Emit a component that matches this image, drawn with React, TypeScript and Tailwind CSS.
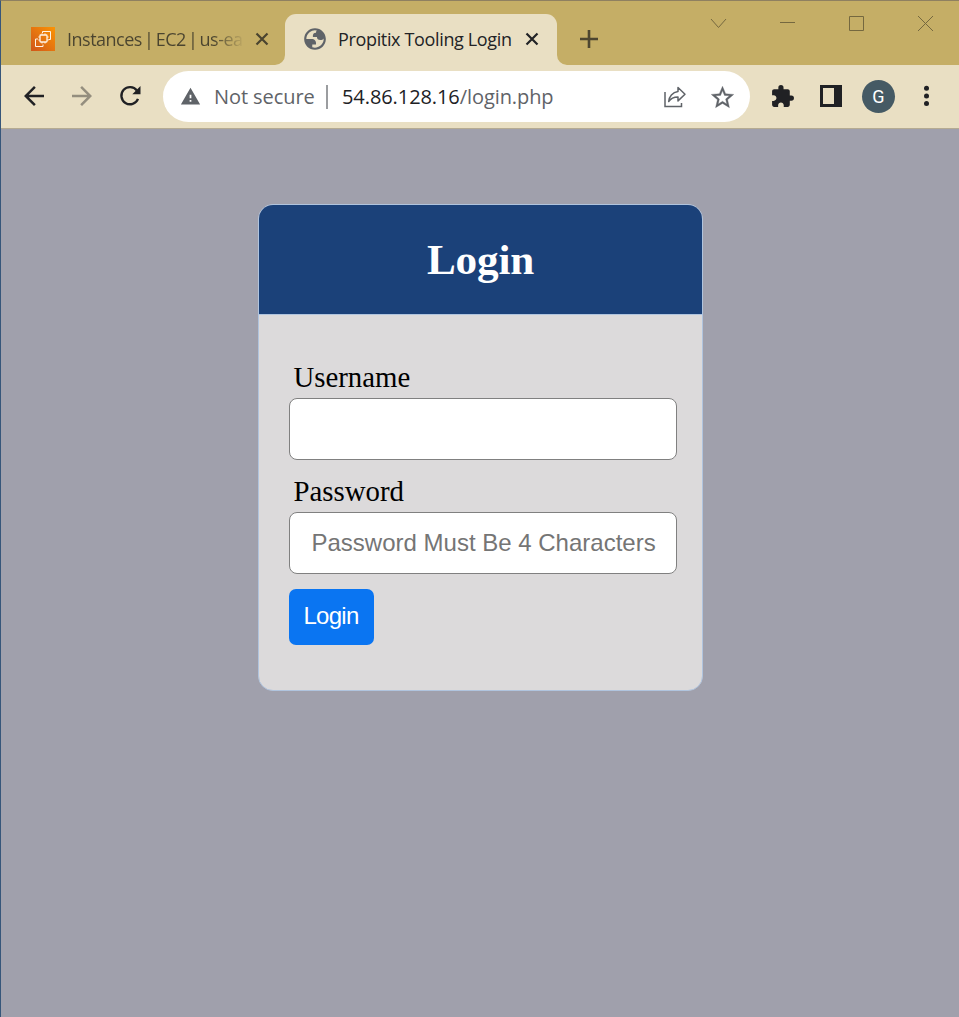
import type { ReactNode } from "react";

function Icon({ size, box = "0 0 24 24", className = "", children }: { size: number; box?: string; className?: string; children: ReactNode }) {
  return (
    <svg width={size} height={size} viewBox={box} fill="currentColor" className={`block shrink-0 ${className}`} aria-hidden="true">
      {children}
    </svg>
  );
}

function Ec2Icon() {
  return (
    <svg width="24" height="24" viewBox="0 0 24 24" className="block shrink-0" aria-hidden="true">
      <defs>
        <linearGradient id="ec2" x1="0" y1="1" x2="1" y2="0">
          <stop offset="0" stopColor="#d05619" />
          <stop offset="1" stopColor="#fb9405" />
        </linearGradient>
      </defs>
      <rect width="24" height="24" fill="url(#ec2)" />
      <g fill="none" stroke="#fff4e6">
        <rect x="9" y="8" width="7" height="7" rx="0.8" strokeWidth="1.300" />
        <path d="M11 6.300v1.500M14 6.300v1.500M11 15v1.600M14 15v1.600M7.300 10h1.500M7.300 13h1.500M16 10h1.700M16 13h1.700" strokeWidth="0.900" />
        <path d="M11.500 6V4.500h8v8h-2M7 12H4.500v7.500h7.500V17.500" strokeWidth="1" />
      </g>
    </svg>
  );
}

function CloseIcon() {
  return (
    <svg width="14" height="14" viewBox="0 0 14 14" className="block shrink-0" aria-hidden="true">
      <path d="M1.500 1.500l11 11M12.500 1.500l-11 11" stroke="currentColor" strokeWidth="2.200" />
    </svg>
  );
}

function WindowControls() {
  return (
    <div className="mt-[14px] ml-auto mr-[25px] flex gap-[52px] text-[#75683f]">
      <svg width="17" height="17" viewBox="0 0 17 17" fill="none" stroke="currentColor"><path d="M1 4l7.500 8.500 7.500-8.500" /></svg>
      <svg width="17" height="17" viewBox="0 0 17 17" fill="none" stroke="currentColor"><path d="M1 7.500h15" /></svg>
      <svg width="17" height="17" viewBox="0 0 17 17" fill="none" stroke="currentColor"><path d="M1.500 1.500h14v14h-14z" /></svg>
      <svg width="17" height="17" viewBox="0 0 17 17" fill="none" stroke="currentColor"><path d="M1 1l15 15M16 1L1 16" /></svg>
    </div>
  );
}

function TabStrip() {
  return (
    <header className="flex h-[64px] bg-[#c5ae66]">
      <div className="mt-[13px] flex h-[50px] w-[274px] items-center pl-[30px] text-[#4a442f]">
        <Ec2Icon />
        <span className="ml-[12px] w-[178px] whitespace-nowrap bg-linear-to-r from-[#4a442f] from-82% to-transparent bg-clip-text font-['Open_Sans','Noto_Sans',sans-serif] text-[18px] tracking-[-0.500px] text-transparent [word-spacing:-2px]">
          Instances | EC2 | us-ea
        </span>
        <span className="ml-[10px]"><CloseIcon /></span>
      </div>
      <svg width="10" height="10" viewBox="0 0 10 10" className="block shrink-0 self-end text-[#e9dfc3]"><path d="M10 0v10H0A10 10 0 0 0 10 0z" fill="currentColor" /></svg>
      <div className="mt-[13px] flex h-[51px] w-[272px] shrink-0 items-center rounded-t-[11px] bg-[#e9dfc3] pb-px pl-[17px] text-[#222326]">
        <Icon size={26} className="text-[#5f6368]">
          <path d="M12 2C6.480 2 2 6.480 2 12s4.480 10 10 10 10-4.480 10-10S17.520 2 12 2zM4 12h4.400c3.407.022 4.922 1.730 4.543 5.127H9.488v2.470a8.004 8.004 0 0 0 10.498-8.083C19.327 12.504 18.332 13 17 13c-2.137 0-3.206-.916-3.206-2.750h-3.748c-.274-2.728.683-4.092 2.870-4.092 0-.975.327-1.597.811-1.970A8.004 8.004 0 0 0 4 12z" fillRule="evenodd" />
        </Icon>
        <span className="ml-[10px] w-[174px] whitespace-nowrap font-['Open_Sans','Noto_Sans',sans-serif] text-[18px] tracking-[-0.350px]">Propitix Tooling Login</span>
        <span className="ml-[13px]"><CloseIcon /></span>
      </div>
      <svg width="10" height="10" viewBox="0 0 10 10" className="block shrink-0 self-end text-[#e9dfc3]"><path d="M0 0v10h10A10 10 0 0 1 0 0z" fill="currentColor" /></svg>
      <svg width="18" height="18" viewBox="0 0 18 18" className="mt-[29px] ml-[13px] block shrink-0"><path d="M9 0v18M0 9h18" stroke="#4d4630" strokeWidth="2.600" /></svg>
      <WindowControls />
    </header>
  );
}

function Toolbar() {
  return (
    <nav className="flex h-[64px] items-center border-b border-[#b5ab92] bg-[#e9dfc3] pb-px text-[#202124]">
      <Icon size={30} className="ml-[18px]"><path d="M20 11H7.830l5.590-5.590L12 4l-8 8 8 8 1.410-1.410L7.830 13H20v-2z" /></Icon>
      <Icon size={30} className="ml-[18px] text-[#948e7e]"><path d="M4 13h12.170l-5.590 5.590L12 20l8-8-8-8-1.410 1.410L16.170 11H4v2z" /></Icon>
      <svg width="24" height="24" viewBox="0 0 24 24" className="ml-[21px] block shrink-0">
        <path d="M18.900 6.500A8.600 8.600 0 1 0 20 14.800" fill="none" stroke="currentColor" strokeWidth="2.300" />
        <path d="M22.500 2v8.200h-8.200z" fill="currentColor" />
      </svg>
      <div className="ml-[21px] flex h-[51px] w-[587px] items-center rounded-full bg-white pl-[17px] font-['Open_Sans','Noto_Sans',sans-serif] text-[20px] text-[#5f6368]">
        <Icon size={21} className="mt-px"><path d="M1 21h22L12 2 1 21zm12-3h-2v-2h2v2zm0-4h-2v-4h2v4z" /></Icon>
        <span className="ml-[13px] w-[112px] whitespace-nowrap pt-[2px] tracking-[-0.080px]">Not secure</span>
        <span className="mt-[2px] h-[24px] w-[2px] shrink-0 bg-[#9b9da0]" />
        <span className="ml-[14px] w-[321px] whitespace-nowrap pt-[2px] tracking-[-0.080px]"><span className="text-[#202124]">54.86.128.16</span>/login.php</span>
        <svg width="24" height="24" viewBox="0 0 24 24" fill="none" stroke="currentColor" strokeWidth="1.500" className="mt-[2px] block shrink-0">
          <path d="M2 7v14.500h16.500V18" />
          <path d="M15 2.500l7 6.700-7 6.700v-4c-4 0-7 1-9.300 4.600C6 11.500 9.500 7.300 15 6.500z" strokeLinejoin="round" />
        </svg>
        <Icon size={27} className="mt-[2px] ml-[22px]"><path stroke="currentColor" strokeWidth="0.300" d="M22 9.240l-7.190-.62L12 2 9.190 8.630 2 9.240l5.460 4.730L5.820 21 12 17.270 18.180 21l-1.630-7.030L22 9.240zM12 15.400l-3.760 2.270 1-4.280-3.320-2.880 4.380-.38L12 6.100l1.710 4.040 4.380.38-3.320 2.880 1 4.280L12 15.400z" /></Icon>
      </div>
      <Icon size={25} className="ml-[20px]"><path d="M20.500 11H19V7c0-1.100-.9-2-2-2h-4V3.500a2.500 2.500 0 0 0-5 0V5H4c-1.100 0-1.990.9-1.990 2v3.800H3.500c1.490 0 2.700 1.210 2.700 2.700s-1.210 2.700-2.700 2.700H2V20c0 1.100.9 2 2 2h3.800v-1.500c0-1.490 1.210-2.700 2.700-2.700s2.700 1.210 2.700 2.700V22H17c1.100 0 2-.9 2-2v-4h1.500a2.500 2.500 0 0 0 0-5z" /></Icon>
      <svg width="22" height="22" viewBox="0 0 22 22" className="ml-[25px] block shrink-0"><path d="M0 0h22v22H0zM3 3v16h11V3z" fill="currentColor" fillRule="evenodd" /></svg>
      <span className="ml-[20px] flex size-[33px] shrink-0 items-center justify-center rounded-full bg-[#455a64] font-['Roboto',sans-serif] text-[18px] text-white">G</span>
      <svg width="6" height="22" viewBox="0 0 6 22" fill="currentColor" className="ml-[28px] block shrink-0"><circle cx="3.500" cy="3.200" r="2.500" /><circle cx="3.500" cy="11" r="2.500" /><circle cx="3.500" cy="18.600" r="2.500" /></svg>
    </nav>
  );
}

function LoginCard() {
  return (
    <main className="mx-auto mt-[75px] h-[487px] w-[445px] overflow-hidden rounded-[15px] border border-[#b0c4de] bg-[#dcdadb]">
      <h1 className="flex h-[110px] items-center justify-center border-b border-[#b0c4de] bg-[#1b4179] pt-[2px] pl-px font-['Liberation_Serif',serif] text-[43.200px] font-bold tracking-[-0.200px] text-white">Login</h1>
      <form className="flex flex-col items-start pt-[45px] pl-[30px]" onSubmit={(e) => e.preventDefault()}>
        <label htmlFor="username" className="ml-[5px] h-[38px] font-['Liberation_Serif',serif] text-[28.800px] leading-[34px] text-black">Username</label>
        <input id="username" className="h-[62px] w-[388px] rounded-[8px] border border-[#808080] bg-white px-[21px] font-['Liberation_Sans',sans-serif] text-[24px] outline-none" />
        <label htmlFor="password" className="mt-[14px] ml-[5px] h-[38px] font-['Liberation_Serif',serif] text-[28.800px] leading-[34px] text-black">Password</label>
        <input id="password" type="password" placeholder="Password Must Be 4 Characters" className="h-[62px] w-[388px] rounded-[8px] border border-[#808080] bg-white pr-[20px] pl-[22px] font-['Liberation_Sans',sans-serif] text-[24px] outline-none placeholder:text-[#757575]" />
        <button type="submit" className="mt-[15px] h-[56px] w-[85px] rounded-[7px] bg-[#0a75f2] pb-[2px] font-['Liberation_Sans',sans-serif] text-[24px] tracking-[-0.700px] text-white">Login</button>
      </form>
    </main>
  );
}

export default function App() {
  return (
    <div className="h-[1017px] w-[959px] overflow-hidden border-t border-l border-t-[#8f8060] border-l-[#36567a] bg-[#a0a0ac]">
      <TabStrip />
      <Toolbar />
      <LoginCard />
    </div>
  );
}
